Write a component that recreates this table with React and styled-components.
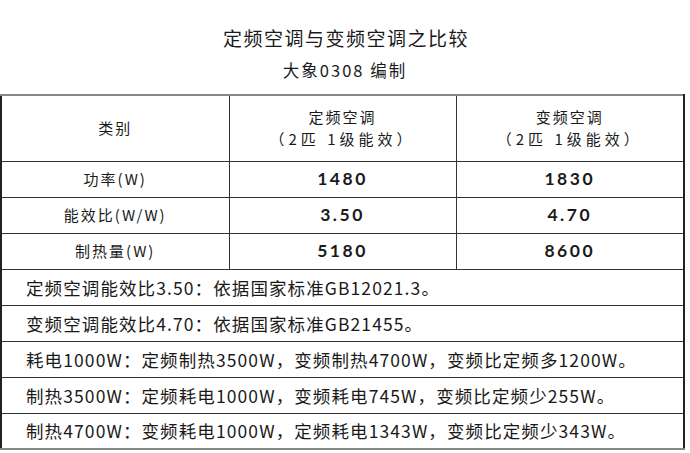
import React from "react";
import styled, { createGlobalStyle } from "styled-components";

const Global = createGlobalStyle`
  body {
    margin: 0;
    background: #fff;
    font-family: "Noto Sans CJK SC", "Noto Sans", sans-serif;
    color: #1a1a1a;
  }
`;

const Page = styled.div`
  width: 690px;
  height: 453px;
  padding-top: 24px;
  box-sizing: border-box;
`;

const Title = styled.h1`
  margin: 0;
  text-align: center;
  font-size: 19px;
  font-weight: 400;
  letter-spacing: 1.5px;
  line-height: 28px;
  padding-left: 2px;
`;

const Subtitle = styled.h2`
  margin: 7px 0 0;
  text-align: center;
  font-size: 16.5px;
  font-weight: 400;
  letter-spacing: 2px;
  line-height: 22px;
`;

const Table = styled.table`
  margin-top: 13px;
  width: 683px;
  border-collapse: collapse;
  table-layout: fixed;
  border-left: 2px solid #222;
  border-right: 2px solid #222;
  border-top: 2px solid #888;
  border-bottom: 2px solid #888;
`;

const Row = styled.tr`
  height: ${(p) => (p.tall ? "66px" : "36px")};
  border-bottom: 1px solid #333;
`;

const Cell = styled.td`
  padding: 0;
  border-left: 1px solid #333;
  text-align: center;
  vertical-align: middle;
  font-size: 15px;
  line-height: 22px;
  letter-spacing: 2px;
`;

const Num = styled.span`
  font-family: Lato, "Noto Sans", sans-serif;
  font-size: 17.5px;
  font-weight: 700;
  letter-spacing: 2.5px;
`;

const Spec = styled.span`
  letter-spacing: 4px;
`;

const NoteCell = styled.td`
  padding: 0 0 0 24px;
  text-align: left;
  vertical-align: middle;
  font-size: 17.5px;
  letter-spacing: 1.1px;
`;

const rows = [
  ["功率(W)", "1480", "1830"],
  ["能效比(W/W)", "3.50", "4.70"],
  ["制热量(W)", "5180", "8600"],
];

const notes = [
  "定频空调能效比3.50：依据国家标准GB12021.3。",
  "变频空调能效比4.70：依据国家标准GB21455。",
  "耗电1000W：定频制热3500W，变频制热4700W，变频比定频多1200W。",
  "制热3500W：定频耗电1000W，变频耗电745W，变频比定频少255W。",
  "制热4700W：变频耗电1000W，定频耗电1343W，变频比定频少343W。",
];

export default function App() {
  return (
    <Page>
      <Global />
      <Title>定频空调与变频空调之比较</Title>
      <Subtitle>大象0308 编制</Subtitle>
      <Table>
        <colgroup>
          <col style={{ width: 228 }} />
          <col style={{ width: 227 }} />
          <col style={{ width: 228 }} />
        </colgroup>
        <tbody>
          <Row tall>
            <Cell>类别</Cell>
            <Cell>
              定频空调
              <br />
              <Spec>（2匹 1级能效）</Spec>
            </Cell>
            <Cell>
              变频空调
              <br />
              <Spec>（2匹 1级能效）</Spec>
            </Cell>
          </Row>
          {rows.map((r) => (
            <Row key={r[0]}>
              <Cell>{r[0]}</Cell>
              <Cell>
                <Num>{r[1]}</Num>
              </Cell>
              <Cell>
                <Num>{r[2]}</Num>
              </Cell>
            </Row>
          ))}
          {notes.map((n) => (
            <Row key={n}>
              <NoteCell colSpan={3}>{n}</NoteCell>
            </Row>
          ))}
        </tbody>
      </Table>
    </Page>
  );
}
